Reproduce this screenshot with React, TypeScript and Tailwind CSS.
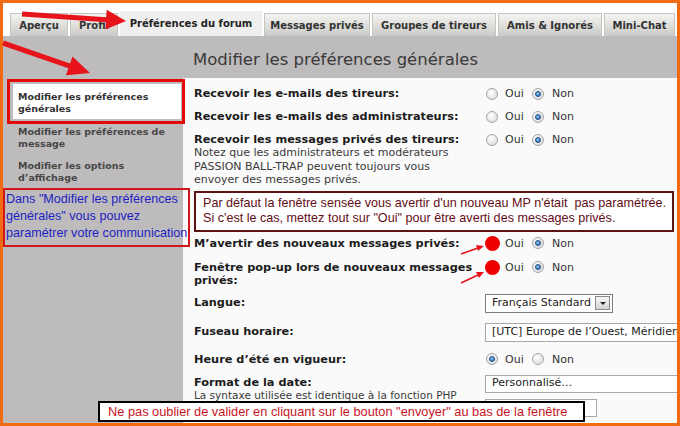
const tabs = [
  { label: "Aperçu", w: "w-[58px]" },
  { label: "Profil", w: "w-[48px]" },
  { label: "Préférences du forum", w: "w-[142px]", active: true },
  { label: "Messages privés", w: "w-[106px]" },
  { label: "Groupes de tireurs", w: "w-[124px]" },
  { label: "Amis & Ignorés", w: "w-[104px]" },
  { label: "Mini-Chat", w: "w-[71px]" },
];

function Radio({ checked, marked }: { checked?: boolean; marked?: boolean }) {
  return (
    <span className="relative flex h-[12px] w-[12px] shrink-0 items-center justify-center rounded-full border border-[#a5a5a5] bg-[radial-gradient(circle_at_40%_35%,#ffffff,#d6d6d6)]">
      {checked && (
        <span className="h-[6px] w-[6px] rounded-full border border-[#1b4a7e] bg-[radial-gradient(circle_at_40%_35%,#8cc8f2,#1f62ad)]" />
      )}
      {marked && (
        <span className="absolute left-[-2px] top-[-2px] h-[15px] w-[15px] rounded-full bg-[#ee0000]" />
      )}
    </span>
  );
}

function YesNo({ yes, marked }: { yes?: boolean; marked?: boolean }) {
  return (
    <div className="flex h-[13px] items-center text-[11px] leading-[13px] text-[#333]">
      <Radio checked={yes} marked={marked} />
      <span className="ml-[7px] w-[27px]">Oui</span>
      <Radio checked={!yes} />
      <span className="ml-[8px]">Non</span>
    </div>
  );
}

function Row({ label, className, children }: { label: string; className: string; children?: React.ReactNode }) {
  return (
    <div className={`flex items-start ${className}`}>
      <div className="w-[292px] shrink-0 text-[11.3px] font-bold leading-[13px] text-[#1c1c1c]">{label}</div>
      {children}
    </div>
  );
}

export default function App() {
  return (
    <div className="relative h-[426px] w-[680px] border-[3px] border-[#f26b12] bg-white font-['DejaVu_Sans',sans-serif]">
      <div className="flex h-full flex-col">
        {/* onglets */}
        <div className="flex h-[33px] shrink-0 items-end gap-[2px] pl-[7px]">
          {tabs.map((t) =>
            t.active ? (
              <div
                key={t.label}
                className={`${t.w} flex h-[25px] items-center justify-center bg-[#efefef] text-[10px] font-bold text-[#222]`}
              >
                {t.label}
              </div>
            ) : (
              <div
                key={t.label}
                className={`${t.w} flex h-[23px] items-center justify-center border border-b-0 border-[#c4c4c0] bg-[linear-gradient(#f4f4f2,#cacac6)] text-[10px] font-bold text-[#333]`}
              >
                {t.label}
              </div>
            )
          )}
        </div>

        <div className="flex min-h-0 flex-1 overflow-hidden bg-[#bdbbbb]">
          {/* menu gauche */}
          <div className="flex w-[180px] shrink-0 flex-col pt-[43px]">
            <div className="relative z-10 ml-[4px] w-[178px] shrink-0 border-[3px] border-[#e10a0a] py-[2px] pl-[3px] pr-[1px]">
              <div className="h-[35px] bg-white pl-[5px] pt-[7px] text-[9.5px] font-bold leading-[12px] text-[#333]">
                Modifier les préférences
                <br />
                générales
              </div>
            </div>
            <div className="mt-[2px] pl-[15px] text-[9.5px] font-bold leading-[12px] text-[#474747]">
              Modifier les préférences de
              <br />
              message
            </div>
            <div className="mt-[10px] pl-[15px] text-[9.5px] font-bold leading-[12px] text-[#474747]">
              Modifier les options
              <br />
              d’affichage
            </div>
            <div className="relative z-10 mt-[4px] w-[187px] shrink-0 whitespace-nowrap border-2 border-[#d01818] pb-[3px] pl-[1px] pt-[1px] font-['Liberation_Sans',sans-serif] text-[12.6px] leading-[17px] text-[#1d1dc4]">
              Dans "Modifier les préférences
              <br />
              générales" vous pouvez
              <br />
              paramétrer votre communication
            </div>
          </div>

          {/* contenu */}
          <div className="flex min-w-0 flex-1 flex-col">
            <div className="h-[42px] shrink-0 pl-[10px] pt-[14px] text-[16.5px] leading-[20px] text-[#3a3a3a]">
              Modifier les préférences générales
            </div>
            <div className="flex-1 bg-[#fafafa] pl-[11px]">
              <Row label="Recevoir les e-mails des tireurs:" className="mt-[9px]">
                <YesNo />
              </Row>
              <Row label="Recevoir les e-mails des administrateurs:" className="mt-[10px]">
                <YesNo />
              </Row>
              <div className="mt-[10px] flex items-start">
                <div className="w-[292px] shrink-0">
                  <div className="text-[11.3px] font-bold leading-[13px] text-[#1c1c1c]">
                    Recevoir les messages privés des tireurs:
                  </div>
                  <div className="w-[262px] text-[11px] leading-[13.5px] text-[#3a3a3a]">
                    Notez que les administrateurs et modérateurs PASSION BALL-TRAP peuvent toujours vous envoyer des
                    messages privés.
                  </div>
                </div>
                <YesNo />
              </div>

              <div className="mt-[4px] w-[480px] whitespace-nowrap border-2 border-[#5a1414] bg-white pb-[4px] pl-[7px] pt-[3px] font-['Liberation_Sans',sans-serif] text-[12.6px] leading-[15px] text-[#640d18]">
                Par défaut la fenêtre sensée vous avertir d'un nouveau MP n'était&nbsp; pas paramétrée.
                <br />
                Si c'est le cas, mettez tout sur "Oui" pour être averti des messages privés.
              </div>

              <Row label="M’avertir des nouveaux messages privés:" className="mt-[5px]">
                <YesNo marked />
              </Row>
              <Row label="Fenêtre pop-up lors de nouveaux messages privés:" className="mt-[11px]">
                <YesNo marked />
              </Row>

              <div className="mt-[7px] flex h-[19px] items-center">
                <div className="w-[292px] shrink-0 text-[11.3px] font-bold text-[#1c1c1c]">Langue:</div>
                <div className="-ml-[1px] flex h-[19px] w-[128px] shrink-0 items-center justify-between border border-[#7c7c7c] bg-white pl-[6px] pr-[2px] text-[11px] text-[#222]">
                  Français Standard
                  <span className="flex h-[14px] w-[15px] items-center justify-center border border-[#8a8a8a] bg-[linear-gradient(#f6f6f6,#d4d4d4)]">
                    <span className="border-x-[3px] border-t-[3px] border-x-transparent border-t-[#222]" />
                  </span>
                </div>
              </div>

              <div className="mt-[10px] flex h-[19px] items-center">
                <div className="w-[292px] shrink-0 text-[11.3px] font-bold text-[#1c1c1c]">Fuseau horaire:</div>
                <div className="-ml-[1px] flex h-[19px] w-[320px] shrink-0 items-center whitespace-nowrap border border-[#a8a8a8] bg-white pl-[6px] text-[11px] text-[#222]">
                  [UTC] Europe de l’Ouest, Méridien
                </div>
              </div>

              <Row label="Heure d’été en vigueur:" className="mt-[11px]">
                <YesNo yes />
              </Row>

              <div className="mt-[10px] flex items-start">
                <div className="w-[292px] shrink-0">
                  <div className="text-[11.3px] font-bold leading-[13px] text-[#1c1c1c]">Format de la date:</div>
                  <div className="whitespace-nowrap text-[10.5px] leading-[13px] text-[#3a3a3a]">
                    La syntaxe utilisée est identique à la fonction PHP
                  </div>
                </div>
                <div className="flex flex-col">
                  <div className="-ml-[1px] -mt-[1px] flex h-[18px] w-[320px] shrink-0 items-center border border-[#a8a8a8] bg-white pl-[6px] text-[11px] text-[#222]">
                    Personnalisé…
                  </div>
                  <div className="-ml-[1px] mt-[6px] h-[18px] w-[112px] border border-[#a8a8a8] bg-white" />
                </div>
              </div>
            </div>
          </div>
        </div>
      </div>

      {/* annotations */}
      <div className="absolute left-[95px] top-[398px] z-20 flex h-[21px] w-[487px] items-center whitespace-nowrap border-2 border-black bg-white pl-[8px] font-['Liberation_Sans',sans-serif] text-[12.8px] text-[#c8141e]">
        Ne pas oublier de valider en cliquant sur le bouton "envoyer" au bas de la fenêtre
      </div>

      <svg
        className="pointer-events-none absolute left-[-3px] top-[-3px] z-30"
        width="680"
        height="426"
        viewBox="0 0 680 426"
      >
        <polygon
          fill="#e8141c"
          points="22.2,11.5 106.2,17.2 106.7,9.7 126,21 105.4,29.6 105.9,22.2 21.8,16.5"
        />
        <polygon
          fill="#e8141c"
          points="3.8,40.6 70,63.4 72.5,56.4 90,73 65.9,75.3 68.4,68.2 2.2,45.4"
        />
        <g stroke="#e8141c" strokeWidth="1.6" fill="#e8141c">
          <line x1="461" y1="254" x2="478" y2="248" />
          <polygon points="484,246 476,245 478,251" stroke="none" />
          <line x1="461" y1="283" x2="478" y2="275" />
          <polygon points="484,272 476,272 479,278" stroke="none" />
        </g>
      </svg>
    </div>
  );
}
